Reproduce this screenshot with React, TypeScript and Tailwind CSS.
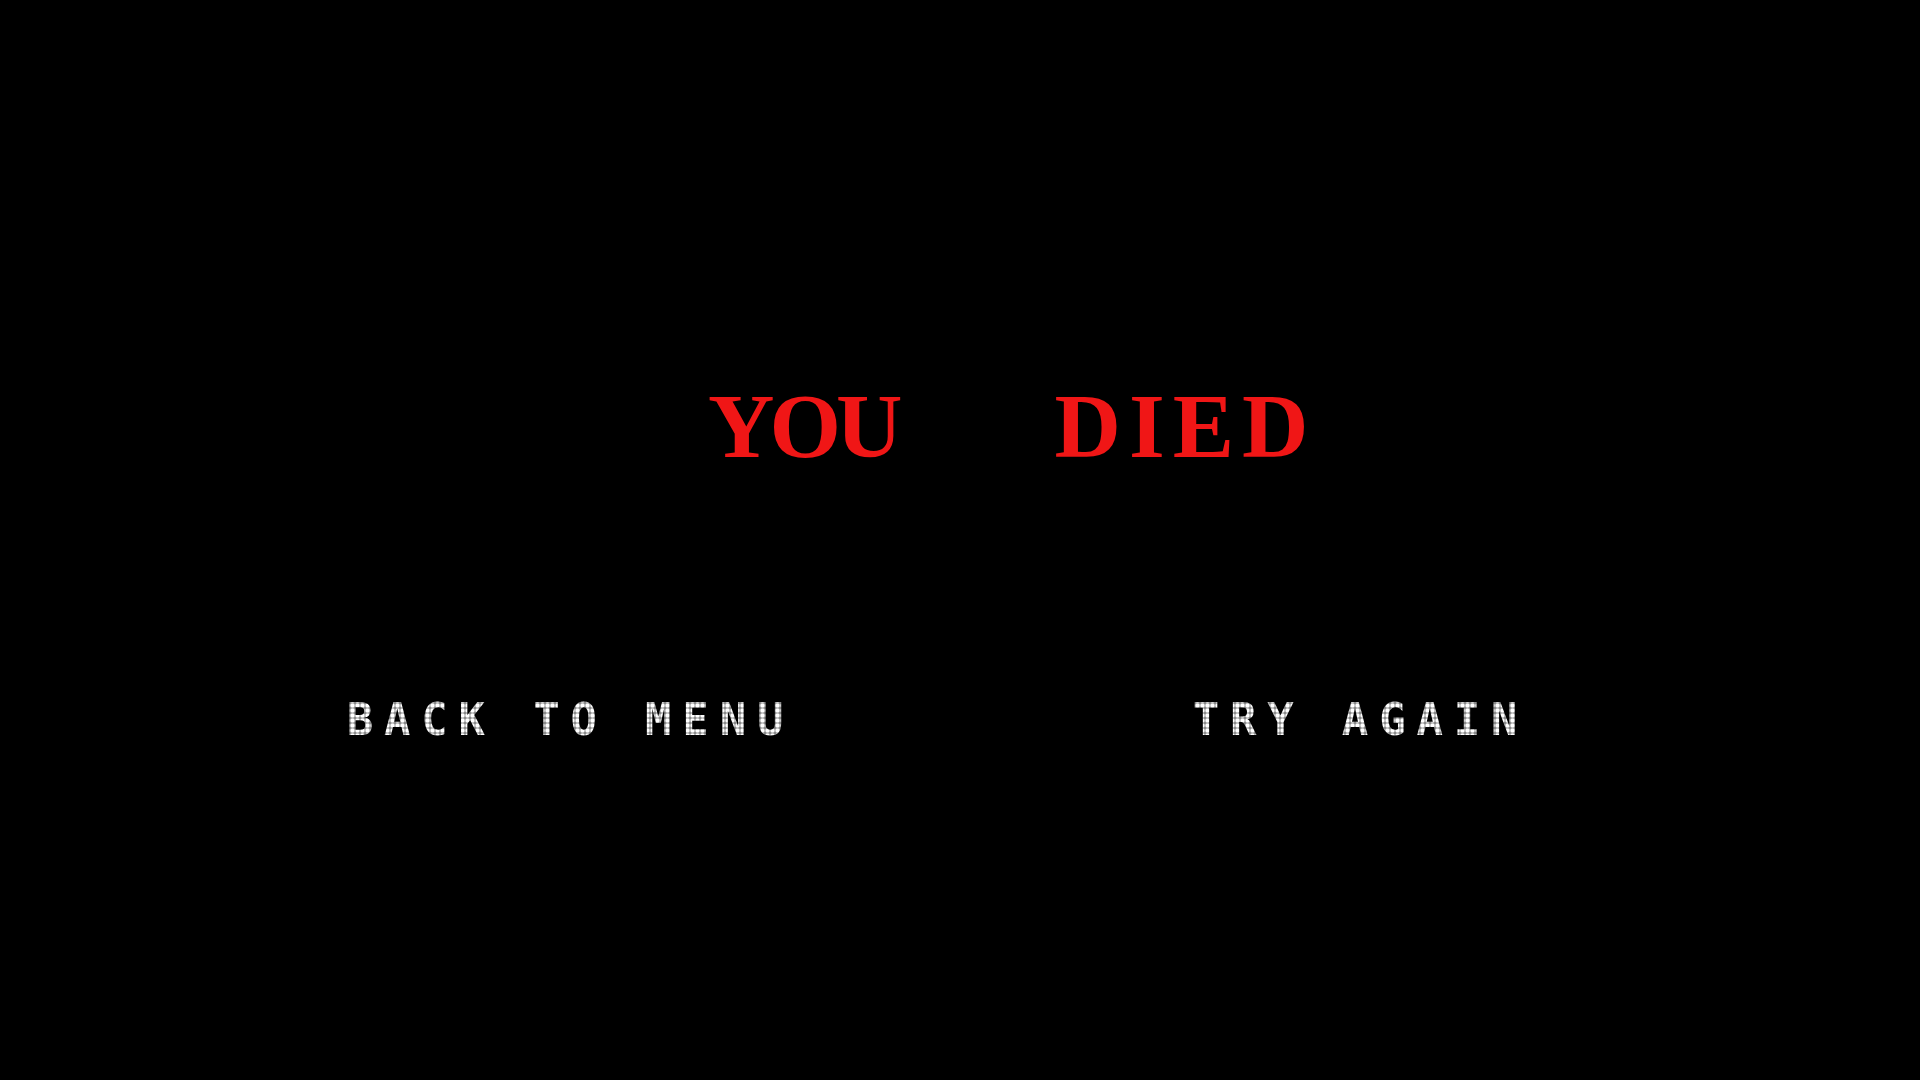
import React from 'react';

export default function App() {
  return (
    <div className="w-[1920px] h-[1080px] bg-black overflow-hidden flex flex-col">
      {/* Title */}
      <div className="pt-[380px] pl-[708px] flex items-start font-['Liberation_Serif',serif] font-bold text-[92px] leading-none text-[#f01616]">
        <span className="tracking-[-5px]">YOU</span>
        <span className="ml-[157px] tracking-[8px]">DIED</span>
      </div>

      {/* Options */}
      <div className="mt-[226px] mx-auto w-[1580px] grid grid-cols-2 font-['DejaVu_Sans_Mono',monospace] font-bold text-[44px] leading-none tracking-[10.8px]">
        <button className="text-center pl-[11px] bg-[radial-gradient(circle,#ffffff_40%,#8a8a8a_80%)] bg-[length:5px_5px] bg-clip-text text-transparent">
          BACK TO MENU
        </button>
        <button className="text-center pl-[11px] bg-[radial-gradient(circle,#ffffff_40%,#8a8a8a_80%)] bg-[length:5px_5px] bg-clip-text text-transparent">
          TRY AGAIN
        </button>
      </div>
    </div>
  );
}
